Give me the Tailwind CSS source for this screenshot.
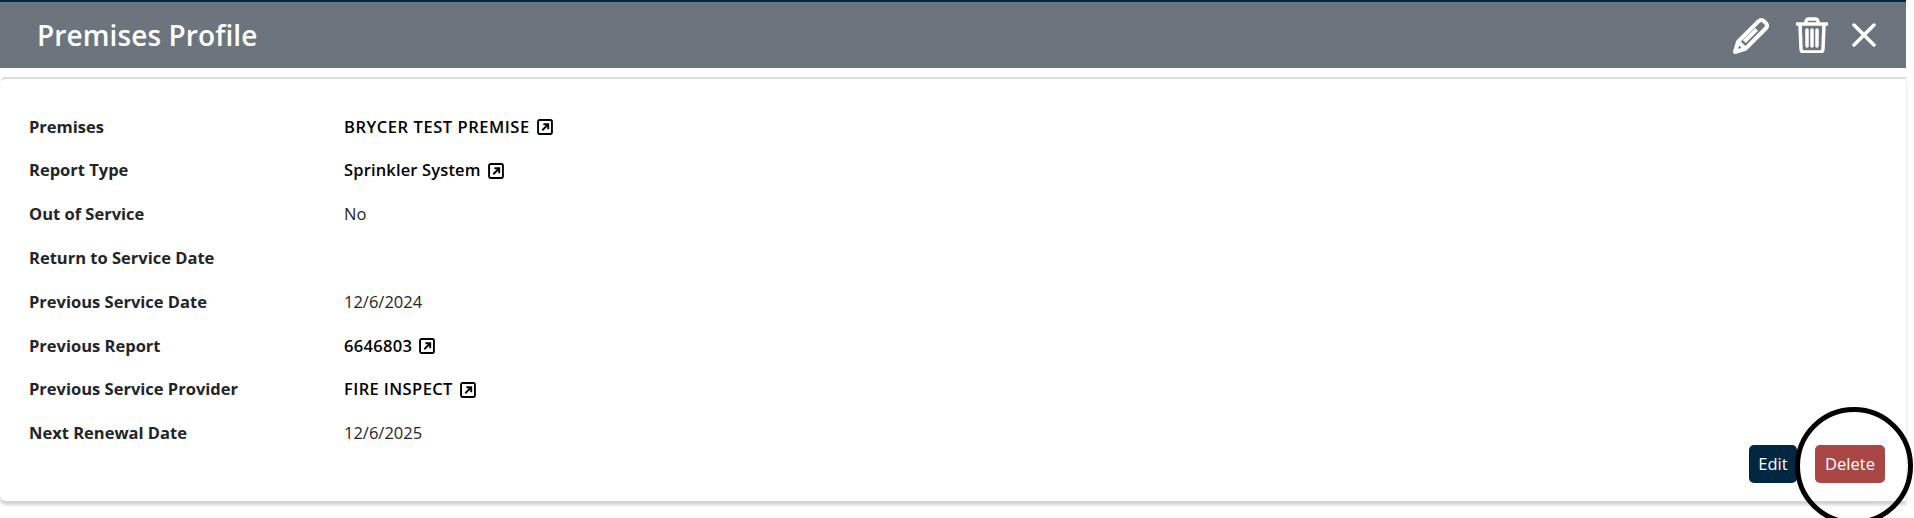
<!DOCTYPE html>
<html lang="en">
<head>
    <meta charset="UTF-8">
    <title>Premises Profile</title>
    <script src="https://cdn.jsdelivr.net/npm/@tailwindcss/browser@4"></script>
</head>
<body class="relative h-[518px] w-[1914px] overflow-hidden bg-white font-['Open_Sans',sans-serif] text-[16.5px] text-[#212529]">
    <header class="flex h-[68px] w-[1906px] items-center justify-between border-t-2 border-[#022a45] bg-[#6c757d] pl-[37px] pr-[30px]">
        <h1 class="text-[28px] font-semibold tracking-[0.1px] text-white">Premises Profile</h1>
        <div class="flex items-center gap-[23px] text-white">
            <!-- pencil -->
            <svg class="h-[37px] w-[37px]" viewBox="0 0 36 36" fill="none" stroke="currentColor" stroke-width="4" stroke-linejoin="round">
                <path d="M2 34l3-10L25 4c1.500-1.500 3.500-1.500 5 0l2 2c1.500 1.500 1.500 3.500 0 5L12 31z" />
                <path d="M5 24l7 7M11 24l12-12" />
            </svg>
            <!-- trash -->
            <svg class="ml-[3px] h-[36px] w-[32px]" viewBox="0 0 32 36" fill="none" stroke="currentColor" stroke-width="3.500" stroke-linecap="round" stroke-linejoin="round">
                <path d="M1 7h30M10 7V5c0-2 1-3 3-3h6c2 0 3 1 3 3v2M4 7l1 25c0 2 1 3 3 3h16c2 0 3-1 3-3l1-25M11 13v16M16 13v16M21 13v16" />
            </svg>
            <!-- close -->
            <svg class="ml-[1px] h-[24px] w-[24px]" viewBox="0 0 24 24" fill="none" stroke="currentColor" stroke-width="3.500" stroke-linecap="round">
                <path d="M2 2l20 20M22 2L2 22" />
            </svg>
        </div>
    </header>

    <main class="mt-[9px] flex h-[424px] w-[1906px] flex-col rounded-l-md border-t-2 border-[#dcdcdc] pl-[29px] pr-[21px] pt-[26px] shadow-[0_4px_3px_rgba(0,0,0,0.18)]">
        <dl class="grid grid-cols-[315px_1fr] auto-rows-[43.8px] items-center">
            <dt class="font-bold">Premises</dt>
            <dd class="flex items-center gap-[7px] font-semibold tracking-[0.55px] text-black">BRYCER TEST PREMISE
                <svg class="h-[16px] w-[16px]" viewBox="0 0 15 15" fill="none" stroke="currentColor"><rect x="1" y="1" width="13" height="13" rx="1.500" stroke-width="1.800" /><path d="M5 10.500L10 5.500M6 5h4.500v4.500" stroke-width="1.800" /></svg>
            </dd>
            <dt class="font-bold">Report Type</dt>
            <dd class="flex items-center gap-[7px] font-semibold tracking-[0.15px] text-black">Sprinkler System
                <svg class="h-[16px] w-[16px]" viewBox="0 0 15 15" fill="none" stroke="currentColor"><rect x="1" y="1" width="13" height="13" rx="1.500" stroke-width="1.800" /><path d="M5 10.500L10 5.500M6 5h4.500v4.500" stroke-width="1.800" /></svg>
            </dd>
            <dt class="font-bold">Out of Service</dt>
            <dd>No</dd>
            <dt class="font-bold">Return to Service Date</dt>
            <dd></dd>
            <dt class="font-bold">Previous Service Date</dt>
            <dd>12/6/2024</dd>
            <dt class="font-bold">Previous Report</dt>
            <dd class="flex items-center gap-[7px] font-semibold tracking-[0.3px] text-black">6646803
                <svg class="h-[16px] w-[16px]" viewBox="0 0 15 15" fill="none" stroke="currentColor"><rect x="1" y="1" width="13" height="13" rx="1.500" stroke-width="1.800" /><path d="M5 10.500L10 5.500M6 5h4.500v4.500" stroke-width="1.800" /></svg>
            </dd>
            <dt class="font-bold">Previous Service Provider</dt>
            <dd class="flex items-center gap-[7px] font-semibold tracking-[0.4px] text-black">FIRE INSPECT
                <svg class="h-[16px] w-[16px]" viewBox="0 0 15 15" fill="none" stroke="currentColor"><rect x="1" y="1" width="13" height="13" rx="1.500" stroke-width="1.800" /><path d="M5 10.500L10 5.500M6 5h4.500v4.500" stroke-width="1.800" /></svg>
            </dd>
            <dt class="font-bold">Next Renewal Date</dt>
            <dd>12/6/2025</dd>
        </dl>
        <div class="mt-[-10px] flex justify-end gap-[18px]">
            <button class="h-[38px] w-[48px] rounded-[5px] bg-[#022743] text-white">Edit</button>
            <button class="h-[38px] w-[70px] rounded-[5px] bg-[#a94646] text-white">Delete</button>
        </div>
    </main>

    <!-- annotation circle drawn over the screenshot -->
    <div class="absolute left-[1795px] top-[407px] h-[118px] w-[118px] rounded-full border-[5px] border-black"></div>
</body>
</html>
